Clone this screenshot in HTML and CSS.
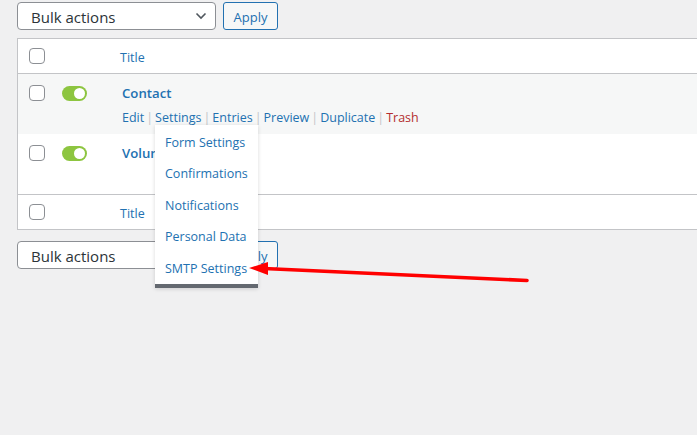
FILE: index.html
```html
<!DOCTYPE html>
<html>
<head>
<meta charset="utf-8">
<link rel="stylesheet" href="styles.css">
</head>
<body>
<div class="page">
  <div class="tablenav">
    <div class="select"><span>Bulk actions</span>
      <svg class="chev" width="12" height="8" viewBox="0 0 12 8"><path d="M1.5 1.5 L6 6 L10.5 1.5" fill="none" stroke="#50575e" stroke-width="1.6"/></svg>
    </div>
    <div class="btn">Apply</div>
  </div>

  <div class="table">
    <div class="row head">
      <div class="cb"><span class="box"></span></div>
      <div class="tg"></div>
      <div class="ttl"><a class="hlink">Title</a></div>
    </div>
    <div class="row item alt">
      <div class="cb"><span class="box"></span></div>
      <div class="tg"><span class="toggle"></span></div>
      <div class="ttl">
        <a class="name">Contact</a>
        <div class="actions">
          <a>Edit</a><span class="sep">|</span><a>Settings</a><span class="sep">|</span><a>Entries</a><span class="sep">|</span><a>Preview</a><span class="sep">|</span><a>Duplicate</a><span class="sep">|</span><a class="trash">Trash</a>
        </div>
      </div>
    </div>
    <div class="row item">
      <div class="cb"><span class="box"></span></div>
      <div class="tg"><span class="toggle"></span></div>
      <div class="ttl">
        <a class="name">Volunteer</a>
      </div>
    </div>
    <div class="row foot">
      <div class="cb"><span class="box"></span></div>
      <div class="tg"></div>
      <div class="ttl"><a class="hlink">Title</a></div>
    </div>
  </div>

  <div class="tablenav bottom">
    <div class="select"><span>Bulk actions</span>
      <svg class="chev" width="12" height="8" viewBox="0 0 12 8"><path d="M1.5 1.5 L6 6 L10.5 1.5" fill="none" stroke="#50575e" stroke-width="1.6"/></svg>
    </div>
    <div class="btn">Apply</div>
  </div>
</div>

<div class="menu">
  <a>Form Settings</a>
  <a>Confirmations</a>
  <a>Notifications</a>
  <a>Personal Data</a>
  <a>SMTP Settings</a>
</div>

<svg class="arrow" width="697" height="435" viewBox="0 0 697 435">
  <line x1="527" y1="280.5" x2="264" y2="268.5" stroke="#f00" stroke-width="3.6" stroke-linecap="round"/>
  <polygon points="249,268 268,262 268,275" fill="#f00"/>
</svg>
</body>
</html>
```

FILE: styles.css
```css
html, body {
  margin: 0;
  padding: 0;
  background: #f0f0f1;
  overflow: hidden;
  width: 697px;
  height: 435px;
}
body {
  font-family: "Open Sans", "Noto Sans", sans-serif;
  font-size: 12.5px;
  color: #3c434a;
  position: relative;
}
a {
  color: #2271b1;
  text-decoration: none;
}
.page {
  padding: 2px 0 0 17px;
}
.tablenav {
  display: flex;
  gap: 7px;
  height: 28px;
}
.tablenav.bottom {
  margin-top: 11px;
}
.select {
  box-sizing: border-box;
  width: 199px;
  height: 28px;
  border: 1px solid #8c8f94;
  border-radius: 4px;
  background: #fff;
  display: flex;
  align-items: center;
  justify-content: space-between;
  padding: 2px 8px 0 13px;
  font-size: 15px;
  color: #2c3338;
}
.chev {
  display: block;
  margin-top: -2px;
}
.btn {
  box-sizing: border-box;
  width: 55px;
  height: 28px;
  border: 1px solid #2271b1;
  border-radius: 3px;
  background: #f6f7f7;
  color: #2271b1;
  display: flex;
  align-items: center;
  justify-content: center;
  padding-top: 2px;
  font-size: 13px;
}
.table {
  margin-top: 8px;
  width: 720px;
  box-sizing: border-box;
  border: 1px solid #c3c4c7;
  background: #fff;
}
.row {
  display: flex;
  align-items: flex-start;
}
.head {
  height: 34px;
  border-bottom: 1px solid #c3c4c7;
  align-items: center;
}
.foot {
  height: 34px;
  border-top: 1px solid #c3c4c7;
  align-items: center;
}
.item {
  height: 60px;
}
.alt {
  background: #f6f7f7;
}
.cb {
  width: 44px;
  padding-left: 11px;
  box-sizing: border-box;
  display: flex;
  align-items: center;
}
.item .cb {
  padding-top: 11px;
}
.box {
  display: block;
  box-sizing: border-box;
  width: 16px;
  height: 16px;
  border: 1px solid #8c8f94;
  border-radius: 4px;
  background: #fff;
}
.tg {
  width: 57px;
  box-sizing: border-box;
}
.item .tg {
  padding-top: 12px;
}
.toggle {
  display: block;
  position: relative;
  width: 25px;
  height: 15px;
  border-radius: 8px;
  background: #8dc540;
}
.toggle::after {
  content: "";
  position: absolute;
  right: 2px;
  top: 2px;
  width: 11px;
  height: 11px;
  border-radius: 50%;
  background: #fff;
}
.ttl {
  flex: 1;
}
.hlink {
  margin-left: 1px;
  position: relative;
  top: 1px;
}
.item .ttl {
  padding-top: 10px;
  padding-left: 3px;
}
.name {
  font-size: 13.2px;
  font-weight: 600;
  color: #2271b1;
  line-height: 19px;
  display: block;
}
.actions {
  margin-top: 6px;
  line-height: 18px;
}
.sep {
  color: #c3c4c7;
  margin: 0 2px;
}
.trash {
  color: #b32d2e;
}
.menu {
  position: absolute;
  left: 155px;
  top: 125px;
  width: 103px;
  box-sizing: border-box;
  background: #fff;
  padding-top: 1.5px;
  border-bottom: 4px solid #646970;
  box-shadow: 0 1px 4px rgba(0,0,0,0.15);
  display: flex;
  flex-direction: column;
}
.menu a {
  height: 31.5px;
  line-height: 31.5px;
  padding-left: 10px;
  white-space: nowrap;
}
.arrow {
  position: absolute;
  left: 0;
  top: 0;
  pointer-events: none;
}
```
